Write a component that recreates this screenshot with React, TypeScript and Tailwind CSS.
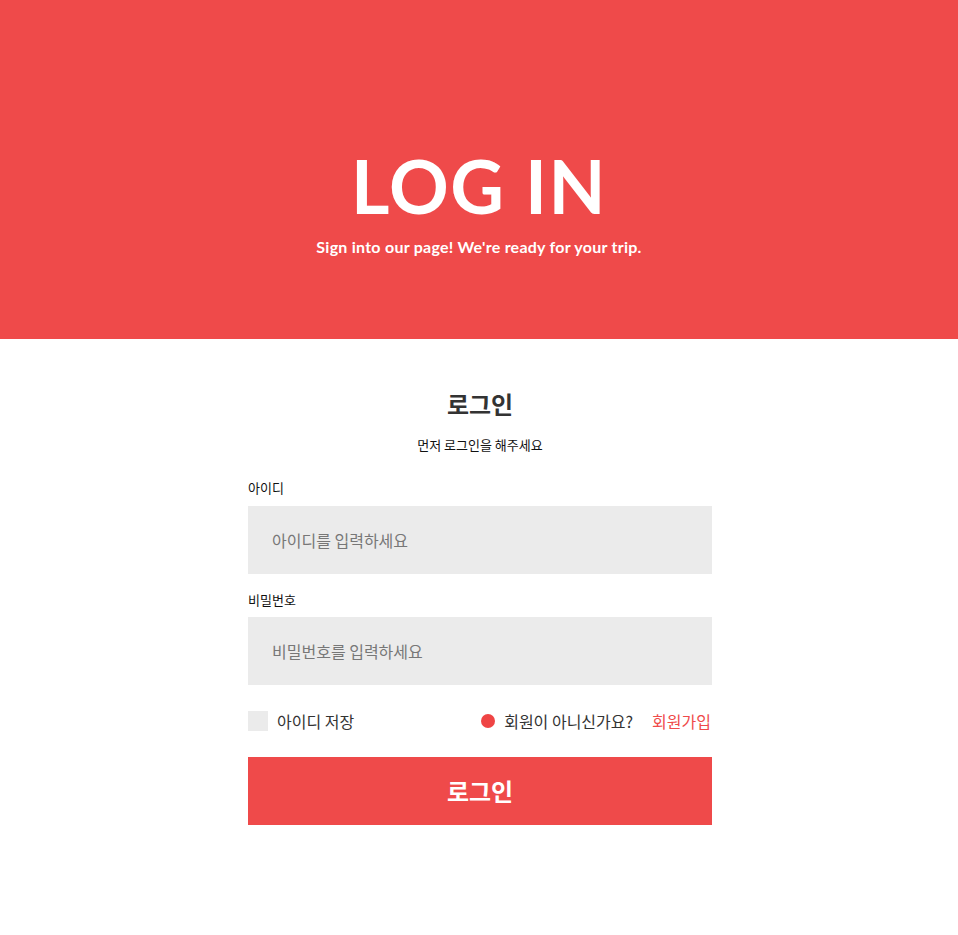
import React from "react";

export default function App() {
  const kr = { fontFamily: '"Noto Sans CJK KR", "Noto Sans", sans-serif' };
  return (
    <div className="min-h-[935px] bg-white" style={kr}>
      <header className="flex h-[339px] flex-col items-center justify-center bg-[#ef4a4a] text-white">
        <h1
          className="mt-[68px] text-[74px] font-bold leading-none tracking-[1.5px]"
          style={{ fontFamily: '"Lato", "Noto Sans", sans-serif' }}
        >
          LOG IN
        </h1>
        <p
          className="mt-[12px] text-[16px] font-bold tracking-[0.25px]"
          style={{ fontFamily: '"Lato", "Noto Sans", sans-serif' }}
        >
          Sign into our page! We're ready for your trip.
        </p>
      </header>
      <div className="flex justify-center pl-[2px]">
        <main className="flex w-[464px] flex-col pt-[49px]">
          <h2 className="text-center text-[24px] font-bold leading-[32px] text-[#333]">로그인</h2>
          <p className="mt-[16px] text-center text-[13px] leading-[18px] text-[#111]">먼저 로그인을 해주세요</p>
          <label className="mt-[25px] text-[13px] leading-[18px] text-[#111]">아이디</label>
          <div className="mt-[9px] flex h-[68px] items-center bg-[#ebebeb] px-[24px] text-[16px] text-[#777]">
            아이디를 입력하세요
          </div>
          <label className="mt-[17px] text-[13px] leading-[18px] text-[#111]">비밀번호</label>
          <div className="mt-[8px] flex h-[68px] items-center bg-[#ebebeb] px-[24px] text-[16px] text-[#777]">
            비밀번호를 입력하세요
          </div>
          <div className="mt-[26px] flex h-[20px] items-center justify-between text-[16px] text-[#333]">
            <div className="flex items-center">
              <span className="h-[20px] w-[20px] bg-[#ebebeb]" />
              <span className="ml-[9px]">아이디 저장</span>
            </div>
            <div className="flex items-center pr-[1px]">
              <span className="h-[14px] w-[14px] rounded-full bg-[#ef4444]" />
              <span className="ml-[9px]">회원이 아니신가요?</span>
              <span className="ml-[19px] text-[#ef4a4a]">회원가입</span>
            </div>
          </div>
          <button className="mt-[26px] flex h-[68px] items-center justify-center bg-[#ef4a4a] text-[24px] font-bold text-white">
            로그인
          </button>
        </main>
      </div>
    </div>
  );
}
